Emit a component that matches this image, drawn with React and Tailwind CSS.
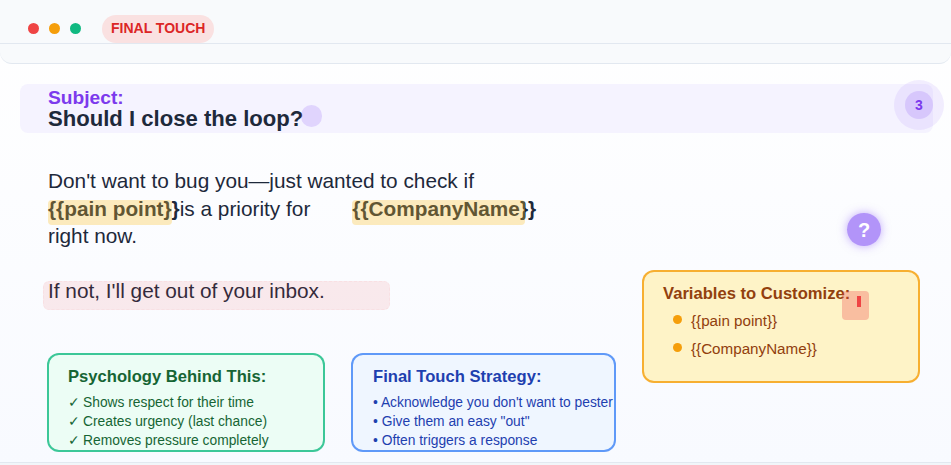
import React from 'react';

const font = { fontFamily: '"Liberation Sans", Arial, sans-serif' };

function InfoCard({ title, items, mark, className, titleClass, itemClass }) {
  return (
    <div className={`h-[99px] rounded-xl border-2 pt-[13px] overflow-hidden ${className}`}>
      <h4 className={`text-[16.6px] leading-[18px] font-bold mb-[7px] ${titleClass}`}>{title}</h4>
      <ul className={`text-[13.8px] leading-[19px] whitespace-nowrap ${itemClass}`}>
        {items.map((item) => (
          <li key={item}>
            <span className={mark === '✓' ? 'inline-block w-[15px]' : ''}>{mark}</span>
            {mark === '✓' ? '' : ' '}
            {item}
          </li>
        ))}
      </ul>
    </div>
  );
}

function VariableItem({ children }) {
  return (
    <li className="flex items-center h-[28px]">
      <span className="ml-[10px] mr-[9px] mb-[3px] w-[9px] h-[9px] rounded-full bg-[#f59e0b]" />
      {children}
    </li>
  );
}

export default function App() {
  return (
    <div style={font} className="relative w-[951px] h-[465px] overflow-hidden bg-gradient-to-b from-white to-[#f8faff] text-[#1e293b]">
      {/* window bar */}
      <div className="h-[44px] bg-[#f8fafc] border-b border-[#e2e8f0] flex items-end pl-[28px]">
        <div className="flex items-center gap-[10px] mb-[9px]">
          <span className="w-[11px] h-[11px] rounded-full bg-[#ef4444]" />
          <span className="w-[11px] h-[11px] rounded-full bg-[#f59e0b]" />
          <span className="w-[11px] h-[11px] rounded-full bg-[#10b981]" />
        </div>
        <span className="ml-[21px] h-[28px] pl-[9px] pr-[9px] pb-[2px] rounded-full bg-[#fae1e1] text-[#dc2626] text-sm font-bold flex items-center">
          FINAL TOUCH
        </span>
      </div>
      <div className="h-[20px] bg-[#f8fafc] border-b border-[#e2e8f0] rounded-bl-xl rounded-br-xl" />

      {/* subject */}
      <div className="mt-[20px] ml-[20px] h-[49px] rounded-lg bg-[#f5f3ff] pl-[28px] pt-[5px] w-[913px]">
        <div className="text-[#7c3aed] text-[19.2px] font-bold leading-[18px]">Subject:</div>
        <div className="text-[22.1px] font-bold leading-[23px]">Should I close the loop?</div>
      </div>

      {/* body copy */}
      <div className="ml-[48px] mt-[34px] w-[520px] text-[20.8px] leading-[27.5px]">
        <p>Don't want to bug you—just wanted to check if</p>
        <p className="whitespace-nowrap">
          <span className="font-bold">{'{{pain point}}'}</span>
          <span>is a priority for</span>
          <span className="ml-[42px] font-bold">{'{{CompanyName}}'}</span>
        </p>
        <p>right now.</p>
        <p className="mt-[27px]">If not, I'll get out of your inbox.</p>
      </div>

      {/* cards */}
      <div className="ml-[47px] mt-[49px] flex gap-[26px]">
        <InfoCard
          title="Psychology Behind This:"
          mark="✓"
          items={['Shows respect for their time', 'Creates urgency (last chance)', 'Removes pressure completely']}
          className="w-[278px] pl-[19px] bg-[#ecfdf5] border-[#10b981]/80"
          titleClass="text-[#166534]"
          itemClass="text-[#166534]"
        />
        <InfoCard
          title="Final Touch Strategy:"
          mark="•"
          items={['Acknowledge you don\'t want to pester', 'Give them an easy "out"', 'Often triggers a response']}
          className="w-[265px] pl-[20px] bg-[#eff6ff] border-[#3b82f6]/80"
          titleClass="text-[#1e40af]"
          itemClass="text-[#1e40af]"
        />
      </div>

      {/* overlays */}
      <div className="absolute left-[301px] top-[105px] w-[21px] h-[22px] rounded-full bg-[#8b5cf6]/20" />
      <div className="absolute left-[894px] top-[80px] w-[50px] h-[50px] rounded-full bg-[#8b5cf6]/10 flex items-center justify-center">
        <div className="w-[28px] h-[28px] rounded-full bg-[#8b5cf6]/20 flex items-center justify-center text-[#7c3aed] text-sm font-bold">3</div>
      </div>
      <div className="absolute left-[48px] top-[200px] w-[124px] h-[25px] rounded bg-[#fbbf24]/30" />
      <div className="absolute left-[352px] top-[200px] w-[173px] h-[25px] rounded bg-[#fbbf24]/30" />
      <div className="absolute left-[43px] top-[281px] w-[347px] h-[29px] rounded-md bg-[#ef4444]/10 border border-dashed border-[#ef4444]/5" />
      <div className="absolute left-[847px] top-[213px] w-[34px] h-[33px] rounded-full bg-[#8b5cf6]/65 shadow-[0_0_10px_rgba(139,92,246,0.5)] flex items-center justify-center text-white text-xl font-bold">?</div>

      <div className="absolute left-[642px] top-[270px] w-[278px] h-[113px] rounded-xl border-2 border-[#f59e0b]/80 bg-[#fef3c7] pl-[19px] pt-[13px]">
        <h4 className="text-[16.6px] leading-[18px] font-bold text-[#92400e]">Variables to Customize:</h4>
        <ul className="mt-[4px] text-[15.2px] text-[#92400e]">
          <VariableItem>{'{{pain point}}'}</VariableItem>
          <VariableItem>{'{{CompanyName}}'}</VariableItem>
        </ul>
      </div>
      <div className="absolute left-[842px] top-[291px] w-[27px] h-[29px] rounded bg-[#ef4444]/30 pl-[15px] pt-[5px]">
        <div className="w-[4px] h-[11px] bg-[#ef4444]" />
      </div>

      <div className="absolute left-0 right-0 bottom-0 h-[3px] bg-[#f1f5f9] border-t border-[#e2e8f0]" />
    </div>
  );
}
